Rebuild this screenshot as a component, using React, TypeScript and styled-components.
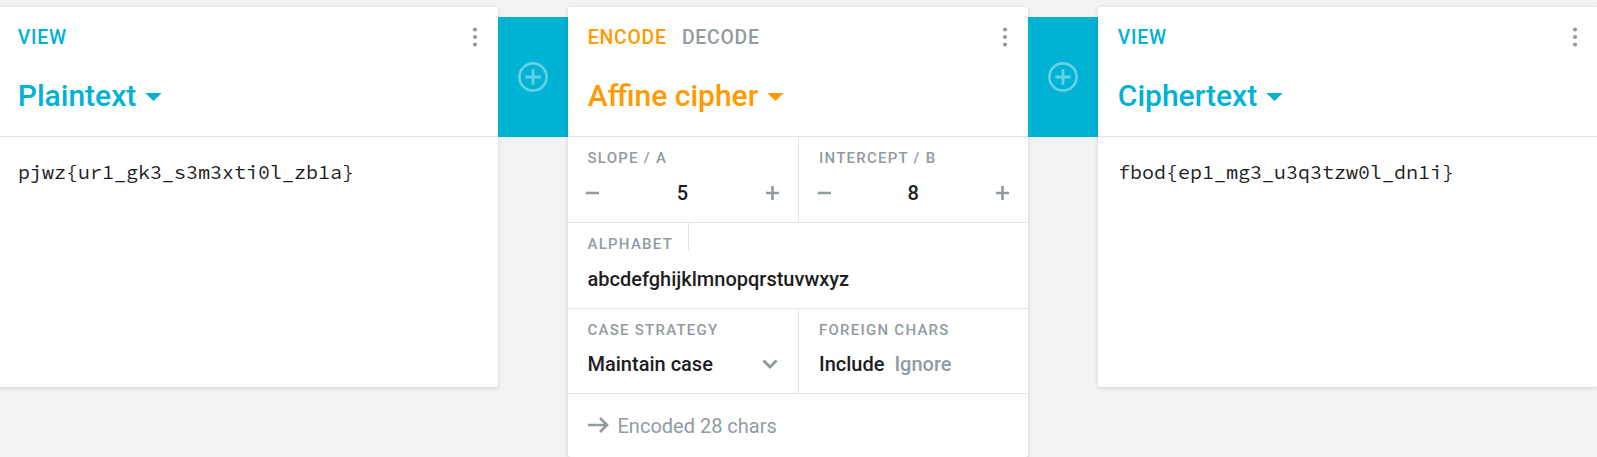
import React from 'react';
import styled, { createGlobalStyle } from 'styled-components';

const BLUE = '#00b2d4';
const ORANGE = '#ff9a00';
const GREY = '#929b9f';
const LINE = '#e1e5e9';
const INK = '#1d1e1f';

const GlobalStyle = createGlobalStyle`
  *, *::before, *::after { box-sizing: border-box; }
  body {
    margin: 0;
    background: #f2f3f5;
    font-family: Roboto, "Liberation Sans", sans-serif;
    font-weight: 500;
    color: ${INK};
  }
`;

const Viewport = styled.main`
  height: 457px;
  overflow: hidden;
  background: #f2f3f5;
`;

const Pipe = styled.div`
  display: flex;
  align-items: flex-start;
  width: 1600px;
  margin-left: -2px;
  padding-top: 7px;
`;

const Brick = styled.section<{ $width: number; $height: number }>`
  flex: none;
  display: flex;
  flex-direction: column;
  width: ${p => p.$width}px;
  height: ${p => p.$height}px;
  background: #fff;
  border-radius: 3px;
  box-shadow: 0 1px 4px rgba(20, 30, 40, 0.16);
`;

const Header = styled.header`
  flex: none;
  height: 130px;
  padding: 18px 20px 0;
  border-bottom: 1px solid ${LINE};
`;

const HeaderRow = styled.div`
  display: flex;
  justify-content: space-between;
  height: 24px;
`;

const Modes = styled.div`
  display: flex;
  gap: 15.3px;
  margin-left: -0.2px;
  padding-top: 1px;
`;

const Mode = styled.span<{ $color: string }>`
  font-size: 19.4px;
  line-height: 24px;
  letter-spacing: 0.75px;
  color: ${p => p.$color};
`;

const DotsIcon = styled.svg`
  width: 6px;
  height: 24px;
  fill: ${GREY};
`;

const Title = styled.h2<{ $color: string }>`
  display: flex;
  align-items: center;
  gap: 9px;
  margin: 27px 0 0 -0.2px;
  font-size: 30px;
  line-height: 40px;
  font-weight: 500;
  color: ${p => p.$color};
`;

const Caret = styled.svg`
  width: 17px;
  height: 8px;
  margin-top: 1px;
  fill: currentColor;
`;

const Connector = styled.button`
  flex: none;
  display: flex;
  align-items: center;
  justify-content: center;
  width: 70px;
  height: 120px;
  margin: 10px 0 0;
  padding: 0;
  border: 0;
  background: ${BLUE};
`;

const AddIcon = styled.svg`
  width: 30px;
  height: 30px;
  fill: none;
  stroke: #66d1e5;
`;

const Content = styled.pre`
  margin: 0;
  padding: 20px;
  font-family: "Source Code Pro", "Noto Sans Mono CJK SC", "Liberation Mono", monospace;
  font-size: 20px;
  line-height: 30px;
  font-weight: 400;
`;

const FieldRow = styled.div<{ $height: number }>`
  display: flex;
  height: ${p => p.$height}px;
  border-bottom: 1px solid ${LINE};
`;

const Field = styled.div<{ $width?: number }>`
  flex: ${p => (p.$width ? `0 0 ${p.$width}px` : '1 1 0')};
  padding: 0 20px 0 19.5px;

  & + & {
    padding-left: 20px;
    border-left: 1px solid ${LINE};
  }
`;

const LabelLine = styled.div`
  display: flex;
  height: 27px;
`;

const Label = styled.span<{ $divided?: boolean }>`
  padding: 12px 15px 0 0;
  font-size: 15px;
  line-height: 18px;
  letter-spacing: 1.25px;
  white-space: nowrap;
  color: ${GREY};
  border-right: ${p => (p.$divided ? `1px solid ${LINE}` : '0')};
`;

const Value = styled.div<{ $compact?: boolean }>`
  display: flex;
  align-items: center;
  height: 24px;
  margin-top: ${p => (p.$compact ? 16 : 17)}px;
  gap: 10px;
  font-size: 20px;
  line-height: 24px;
`;

const Spread = styled(Value)`
  justify-content: space-between;
`;

const Muted = styled.span`
  color: ${GREY};
`;

const StepIcon = styled.svg<{ $shift: number }>`
  width: 13px;
  height: 14px;
  margin: 0 ${p => (p.$shift > 0 ? -1 : 0)}px 0 ${p => (p.$shift < 0 ? -1.5 : 0)}px;
  stroke: ${GREY};
  stroke-width: 2.6;
`;

const Chevron = styled.svg`
  width: 16px;
  height: 11px;
  margin-top: 1px;
  fill: none;
  stroke: ${GREY};
  stroke-width: 3;
`;

const Status = styled.footer`
  display: flex;
  align-items: center;
  gap: 8.5px;
  height: 24px;
  margin: 20px 20px 0;
  font-size: 20px;
  font-weight: 400;
  color: ${GREY};
`;

const Arrow = styled.svg`
  width: 21px;
  height: 16px;
  margin-top: -3px;
  fill: none;
  stroke: ${GREY};
  stroke-width: 2.6;
`;

type ModeItem = { label: string; color: string };

function BrickHeader({ modes, title, color }: { modes: ModeItem[]; title: string; color: string }) {
  return (
    <Header>
      <HeaderRow>
        <Modes>
          {modes.map(m => (
            <Mode key={m.label} $color={m.color}>{m.label}</Mode>
          ))}
        </Modes>
        <DotsIcon viewBox="0 0 6 24">
          <circle cx="3" cy="4.5" r="2.1" />
          <circle cx="3" cy="12" r="2.1" />
          <circle cx="3" cy="19.5" r="2.1" />
        </DotsIcon>
      </HeaderRow>
      <Title $color={color}>
        {title}
        <Caret viewBox="0 0 17 8"><path d="M0.3 0h16.4L8.5 8z" /></Caret>
      </Title>
    </Header>
  );
}

function AddButton() {
  return (
    <Connector aria-label="Add">
      <AddIcon viewBox="0 0 30 30">
        <circle cx="15" cy="15" r="13.6" strokeWidth="2.7" />
        <path d="M15 7.3v15.4M7.3 15h15.4" strokeWidth="2.8" />
      </AddIcon>
    </Connector>
  );
}

function Stepper({ value }: { value: number }) {
  return (
    <Spread>
      <StepIcon $shift={-1} viewBox="0 0 13 14"><path d="M0 7h13" /></StepIcon>
      <span>{value}</span>
      <StepIcon $shift={1} viewBox="0 0 13 14"><path d="M0 7h13M6.5 0v14" /></StepIcon>
    </Spread>
  );
}

export default function App() {
  return (
    <Viewport>
      <GlobalStyle />
      <Pipe>
        <Brick $width={500} $height={380}>
          <BrickHeader modes={[{ label: 'VIEW', color: BLUE }]} title="Plaintext" color={BLUE} />
          <Content>{'pjwz{ur1_gk3_s3m3xti0l_zb1a}'}</Content>
        </Brick>
        <AddButton />
        <Brick $width={460} $height={450}>
          <BrickHeader
            modes={[{ label: 'ENCODE', color: ORANGE }, { label: 'DECODE', color: GREY }]}
            title="Affine cipher"
            color={ORANGE}
          />
          <FieldRow $height={86}>
            <Field $width={230}>
              <LabelLine><Label>SLOPE / A</Label></LabelLine>
              <Stepper value={5} />
            </Field>
            <Field>
              <LabelLine><Label>INTERCEPT / B</Label></LabelLine>
              <Stepper value={8} />
            </Field>
          </FieldRow>
          <FieldRow $height={86}>
            <Field>
              <LabelLine><Label $divided>ALPHABET</Label></LabelLine>
              <Value>abcdefghijklmnopqrstuvwxyz</Value>
            </Field>
          </FieldRow>
          <FieldRow $height={85}>
            <Field $width={230}>
              <LabelLine><Label>CASE STRATEGY</Label></LabelLine>
              <Spread $compact>
                <span>Maintain case</span>
                <Chevron viewBox="0 0 16 11"><path d="M1.5 1.5L8 8l6.5-6.5" /></Chevron>
              </Spread>
            </Field>
            <Field>
              <LabelLine><Label>FOREIGN CHARS</Label></LabelLine>
              <Value $compact>
                <span>Include</span>
                <Muted>Ignore</Muted>
              </Value>
            </Field>
          </FieldRow>
          <Status>
            <Arrow viewBox="0 0 21 16"><path d="M0 8h19M12 1l7 7-7 7" /></Arrow>
            <span>Encoded 28 chars</span>
          </Status>
        </Brick>
        <AddButton />
        <Brick $width={500} $height={380}>
          <BrickHeader modes={[{ label: 'VIEW', color: BLUE }]} title="Ciphertext" color={BLUE} />
          <Content>{'fbod{ep1_mg3_u3q3tzw0l_dn1i}'}</Content>
        </Brick>
      </Pipe>
    </Viewport>
  );
}
